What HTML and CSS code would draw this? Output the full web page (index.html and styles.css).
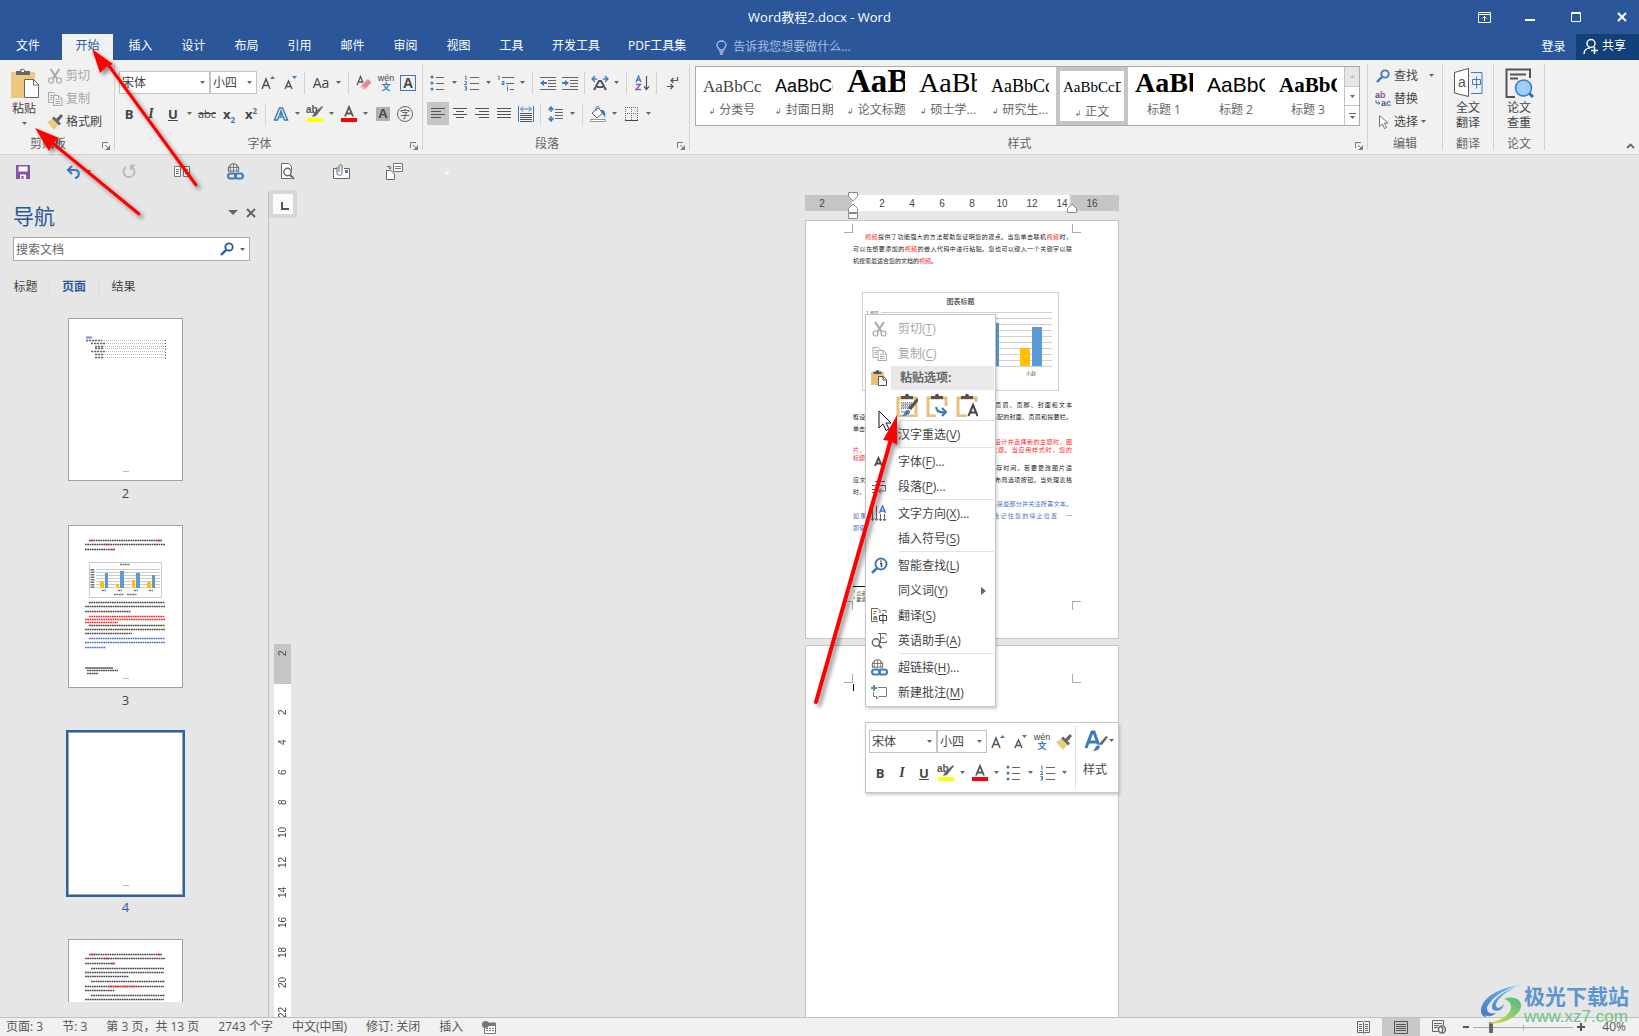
FILE: index.html
```html
<!DOCTYPE html>
<html lang="zh-CN">
<head>
<meta charset="utf-8">
<title>Word教程2.docx - Word</title>
<link rel="stylesheet" href="styles.css">
</head>
<body>
<svg class="defs" aria-hidden="true">
  <defs>
    <filter id="shadow" x="-20%" y="-20%" width="150%" height="150%"><feDropShadow dx="3" dy="3" stdDeviation="2" flood-color="#000" flood-opacity=".45"/></filter>
    <linearGradient id="lg1" x1="0" y1="1" x2="1" y2="0"><stop offset="0" stop-color="#4a78c4"/><stop offset="1" stop-color="#62c3ee"/></linearGradient>
    <linearGradient id="lg2" x1="0" y1="1" x2="1" y2="0"><stop offset="0" stop-color="#d9df4a"/><stop offset="1" stop-color="#4dba86"/></linearGradient>
  </defs>
  <symbol id="dn" viewBox="0 0 5 3"><path d="M0 0h5L2.500 3z" fill="#666"/></symbol>
  <symbol id="launch" viewBox="0 0 8 8"><path d="M.5 6V.5H6M3 3l3.500 3.500M7.500 3.500v4h-4" fill="none" stroke="#777"/><path d="M7.500 4v3.500H4z" fill="#777"/></symbol>
  <symbol id="paste" viewBox="0 0 29 31"><path d="M1 4h24v26H1z" fill="#edc87e"/><path d="M6 7V3h4c0-3 5-3 5 0h5v4z" fill="#666"/><rect x="11.500" y="2" width="2.500" height="2" fill="#fff"/><path d="M14.500 11.500h9l5 5v13h-14z" fill="#fff" stroke="#666"/><path d="M23.500 12v5h5" fill="none" stroke="#666"/></symbol>
  <symbol id="cut" viewBox="0 0 16 16"><path d="M3.500 1l6.500 9.500M12.500 1L6 10.500" stroke="currentColor" stroke-width="2" fill="none"/><circle cx="4" cy="12.500" r="2.500" fill="none" stroke="currentColor" stroke-width="1.200"/><circle cx="12" cy="12.500" r="2.500" fill="none" stroke="currentColor" stroke-width="1.200"/></symbol>
  <symbol id="copy" viewBox="0 0 16 16"><path d="M6 11.500H1.500v-10h5l2 2V5M3 4.500h3M3 6.500h2.500M3 8.500h2.500" fill="none" stroke="currentColor"/><path d="M6.500 4.500H12L15 7.500v7H6.500zM11.500 5v3H15M8.500 8.500h2M8.500 10.500h4.500M8.500 12.500h4.500" fill="none" stroke="currentColor"/></symbol>
  <symbol id="brush" viewBox="0 0 16 16"><path d="M0 8l5-3 6 6-4 5z" fill="#edc87e"/><path d="M5 4.500l2-2 7 7-2 2z" fill="#666"/><path d="M9 5l5-5 2 2-4.500 5.500z" fill="#666"/></symbol>
  <symbol id="grow" viewBox="0 0 14 16"><path d="M9 4h5L11.500 1z" fill="#3e7ab8"/><path d="M1 14L5 4l4 10M2.500 10.500h5" fill="none" stroke="#555" stroke-width="1.500"/></symbol>
  <symbol id="shrink" viewBox="0 0 14 16"><path d="M9 1h5l-2.500 3z" fill="#3e7ab8"/><path d="M2 14l3.500-8L9 14M3.500 11.500h4" fill="none" stroke="#555" stroke-width="1.500"/></symbol>
  <symbol id="eraser" viewBox="0 0 16 16"><path d="M1 10L4.500 1.500 7 8M2 7h4" fill="none" stroke="#555" stroke-width="1.300"/><path d="M5 11l7-7 3.500 3.500-7 7z" fill="#e8838f"/><path d="M4 12l2-2 3.500 3.500L8 15z" fill="#f3b8bf"/></symbol>
  <symbol id="bullets" viewBox="0 0 16 16"><g fill="#3e7ab8"><circle cx="2" cy="2" r="1.500"/><circle cx="2" cy="8" r="1.500"/><circle cx="2" cy="14" r="1.500"/></g><path d="M6 2.500h8M6 8.500h8M6 14.500h8" stroke="#666"/></symbol>
  <symbol id="numbers" viewBox="0 0 16 16"><path d="M1 1h1v4M.5 6.500h2v1.500l-2 1.500h2.500M.5 11.500h2v3.500h-2M1 13h1.500" stroke="#3e7ab8" fill="none"/><path d="M6 2.500h9M6 8.500h9M6 14.500h9" stroke="#666"/></symbol>
  <symbol id="multi" viewBox="0 0 18 16"><path d="M1 1h1v4M5 6.500h2v3H5V8h2M10.500 10v1M10.500 12v4" stroke="#3e7ab8" fill="none"/><path d="M5 2.500h12M9 8.500h8M13 14.500h4" stroke="#666"/></symbol>
  <symbol id="outdent" viewBox="0 0 16 14"><path d="M0 1.500h16M8 4.500h8M8 7.500h8M8 10.500h8M0 13.500h16" stroke="#666"/><path d="M0 7l4-3v2h3v2H4v2z" fill="#3e7ab8"/></symbol>
  <symbol id="indent" viewBox="0 0 16 14"><path d="M0 1.500h16M8 4.500h8M8 7.500h8M8 10.500h8M0 13.500h16" stroke="#666"/><path d="M7 7L3 4v2H0v2h3v2z" fill="#3e7ab8"/></symbol>
  <symbol id="asian" viewBox="0 0 18 16"><path d="M3 15l5-9h2l5 9M6 12h6" fill="none" stroke="#555" stroke-width="2"/><path d="M1 4h5M4 1L1 4l3 3M12 4h5M14 1l3 3-3 3" fill="none" stroke="#3e7ab8" stroke-width="1.300"/></symbol>
  <symbol id="sort" viewBox="0 0 16 16"><path d="M2 7l2.500-6L7 7M3 5h3" fill="none" stroke="#3e7ab8" stroke-width="1.300"/><path d="M2 9.500h4.500L2 14.500h5" fill="none" stroke="#9057b0" stroke-width="1.400"/><path d="M12.500 1v13M10 11.500l2.500 3 2.500-3" fill="none" stroke="#555" stroke-width="1.200"/></symbol>
  <symbol id="marks" viewBox="0 0 14 14"><path d="M12.500 1v3.500H6M8.500 2L6 4.500 8.500 7M2 10.500h6M5.500 8L8 10.500 5.500 13" fill="none" stroke="#555" stroke-width="1.200"/></symbol>
  <symbol id="al" viewBox="0 0 14 12"><path d="M0 .5h14M0 3.500h10M0 6.500h14M0 9.500h10" stroke="#555"/></symbol>
  <symbol id="ac" viewBox="0 0 14 12"><path d="M0 .5h14M3 3.500h8M0 6.500h14M3 9.500h8" stroke="#555"/></symbol>
  <symbol id="ar" viewBox="0 0 14 12"><path d="M0 .5h14M4 3.500h10M0 6.500h14M4 9.500h10" stroke="#555"/></symbol>
  <symbol id="aj" viewBox="0 0 14 12"><path d="M0 .5h14M0 3.500h14M0 6.500h14M0 9.500h14" stroke="#555"/></symbol>
  <symbol id="ad" viewBox="0 0 16 16"><path d="M.5 0v16M15.500 0v16M3 3h10M5 .5L2.500 3 5 5.500M11 .5L13.500 3 11 5.500" fill="none" stroke="#3e7ab8"/><path d="M2 7.500h12M2 9.500h12M2 11.500h12M2 13.500h12M2 15.500h12" stroke="#555"/></symbol>
  <symbol id="ls" viewBox="0 0 16 16"><path d="M3 1v5M3 10v5M.5 4L3 1l2.500 3M.5 12L3 15l2.500-3" fill="none" stroke="#3e7ab8" stroke-width="1.500"/><path d="M7 3.500h8M7 6.500h8M7 9.500h8M7 12.500h8" stroke="#666"/></symbol>
  <symbol id="bucket" viewBox="0 0 18 16"><path d="M3 7l6-5 5 5-6 5zM7 5V1.500c0-1.500 3-1.500 3 0V3" fill="#fff" stroke="#666"/><path d="M11 4c5-1 6 3 5 8-1-3-2-4-3-4z" fill="#3e7ab8"/><path d="M1.500 13.500h15v2h-15z" fill="#fff" stroke="#999"/></symbol>
  <symbol id="borders" viewBox="0 0 14 14"><path d="M.5 0v13M6.500 0v13M12.500 0v13M0 .5h13M0 6.500h13" stroke="#666" stroke-dasharray="1 1"/><path d="M0 13.500h13" stroke="#444"/></symbol>
  <symbol id="pen" viewBox="0 0 18 17"><path d="M16 1l1 1-7 9-4 1 2-4z" fill="#666"/><path d="M1 13h16v4H1z" fill="#ff0"/></symbol>
  <symbol id="fc" viewBox="0 0 18 17"><path d="M5 11.500L9 2l4 9.500M6 8.500h6" fill="none" stroke="#555" stroke-width="1.800"/><path d="M1 13h16v4H1z" fill="#f00"/></symbol>
  <symbol id="glow" viewBox="0 0 16 16"><path d="M1.500 14L6.500 2h3l5 12h-3l-1-3h-5l-1 3zM6.500 9h3L8 5z" fill="#fff" stroke="#3e7ab8" stroke-width="1.500"/></symbol>
  <symbol id="mag" viewBox="0 0 14 14"><circle cx="9" cy="5" r="3.700" fill="none" stroke="currentColor" stroke-width="1.800"/><path d="M6 8L1 13" stroke="currentColor" stroke-width="2.400"/></symbol>
  <symbol id="link" viewBox="0 0 17 17"><circle cx="6.500" cy="6" r="5.300" fill="none" stroke="#666"/><path d="M1 4.500h11M1 8h11M6.500.5v9M4 1.500C3 4 3 7 4 9M9 1.500c1 2.500 1 5 0 7" fill="none" stroke="#666" stroke-width=".8"/><path d="M0 9h17v8H0z" fill="var(--icon-bg,#e6e6e6)"/><rect x="1" y="10.500" width="8" height="5" rx="2.500" fill="none" stroke="#3e7ab8" stroke-width="2"/><rect x="8" y="10.500" width="8" height="5" rx="2.500" fill="none" stroke="#3e7ab8" stroke-width="2"/></symbol>
  <symbol id="cb" viewBox="0 0 22 24"><path d="M2 5h18v18H2z" fill="#fff" stroke="#e8c07a" stroke-width="3"/><path d="M5 6V3h4c0-3 4-3 4 0h4v3z" fill="#555"/></symbol>
</svg>

<div class="app">
  <header class="titlebar">
    <div class="title-row">
      <h1 class="title">Word教程2.docx - Word</h1>
      <div class="window-buttons">
        <button aria-label="功能区显示选项"><svg width="13" height="11"><path d="M.5.500h12v10H.5zM.5 2.500h12M6.500 9V5M4.500 6.500l2-2 2 2" fill="none" stroke="#fff"/></svg></button>
        <button aria-label="最小化"><svg width="10" height="11"><path d="M0 7h10v2H0z" fill="#fff"/></svg></button>
        <button aria-label="最大化"><svg width="10" height="10"><path d="M.5.500h9v9H.5zM0 1.500h10" fill="none" stroke="#fff"/></svg></button>
        <button aria-label="关闭"><svg width="10" height="10"><path d="M1 1l8 8M9 1L1 9" stroke="#fff" stroke-width="2"/></svg></button>
      </div>
    </div>
    <div class="tab-row">
      <nav class="tabs">
        <button class="tab file">文件</button><button class="tab active">开始</button><button class="tab">插入</button><button class="tab">设计</button><button class="tab">布局</button><button class="tab">引用</button><button class="tab">邮件</button><button class="tab">审阅</button><button class="tab">视图</button><button class="tab">工具</button><button class="tab">开发工具</button><button class="tab">PDF工具集</button>
      </nav>
      <button class="tell"><svg width="11" height="15" viewBox="0 0 11 15"><path d="M3.500 10C3 8 1 7.500 1 5a4.500 4 0 0 1 9 0c0 2.500-2 3-2.500 5zM3.500 12h4M4 14h3" fill="none" stroke="#a9bfe0" stroke-width="1.300"/></svg>告诉我您想要做什么...</button>
      <div class="account">
        <button class="login">登录</button>
        <button class="share"><svg width="16" height="17"><circle cx="8" cy="5.500" r="4" fill="none" stroke="#fff" stroke-width="1.500"/><path d="M1 16c0-4 3-6 6-6M11.500 9v7M8 12.500h7" fill="none" stroke="#fff" stroke-width="1.500"/></svg>共享</button>
      </div>
    </div>
  </header>

  <section class="ribbon">
    <div class="group clip">
      <div class="group-body">
        <button class="big"><svg width="29" height="31"><use href="#paste"/></svg><span>粘贴</span><svg class="dn" width="5" height="3"><use href="#dn"/></svg></button>
        <div class="stack">
          <button class="small off"><svg width="16" height="16"><use href="#cut"/></svg>剪切</button>
          <button class="small off"><svg width="16" height="16"><use href="#copy"/></svg>复制</button>
          <button class="small"><svg width="16" height="16"><use href="#brush"/></svg>格式刷</button>
        </div>
      </div>
      <div class="group-name">剪贴板<svg class="launch" width="8" height="8"><use href="#launch"/></svg></div>
    </div>
    <div class="group font">
      <div class="group-body rows">
        <div class="row">
          <label class="combo wide"><select aria-label="字体"><option>宋体</option></select><svg width="5" height="3"><use href="#dn"/></svg></label><label class="combo"><select aria-label="字号"><option>小四</option></select><svg width="5" height="3"><use href="#dn"/></svg></label>
          <button class="ib"><svg width="14" height="16"><use href="#grow"/></svg></button><button class="ib"><svg width="14" height="16"><use href="#shrink"/></svg></button><i class="sep"></i>
          <button class="ib aa">Aa</button><button class="dd"><svg width="5" height="3"><use href="#dn"/></svg></button><i class="sep"></i>
          <button class="ib"><svg width="16" height="16"><use href="#eraser"/></svg></button><button class="ib"><span class="wen">wén<b>文</b></span></button><button class="ib"><span class="boxed">A</span></button>
        </div>
        <div class="row">
          <button class="ib b">B</button><button class="ib i">I</button><button class="ib u">U</button><button class="dd"><svg width="5" height="3"><use href="#dn"/></svg></button>
          <button class="ib strike">abc</button><button class="ib b"><span>x<sub>2</sub></span></button><button class="ib b"><span>x<sup>2</sup></span></button><i class="sep"></i>
          <button class="ib"><svg width="16" height="16"><use href="#glow"/></svg></button><button class="dd"><svg width="5" height="3"><use href="#dn"/></svg></button>
          <button class="ib"><svg width="18" height="17"><text class="ab" x="0" y="8">ab</text><use href="#pen"/></svg></button><button class="dd"><svg width="5" height="3"><use href="#dn"/></svg></button>
          <button class="ib"><svg width="18" height="17"><use href="#fc"/></svg></button><button class="dd"><svg width="5" height="3"><use href="#dn"/></svg></button>
          <button class="ib"><span class="shaded">A</span></button><button class="ib"><span class="circled">字</span></button>
        </div>
      </div>
      <div class="group-name">字体<svg class="launch" width="8" height="8"><use href="#launch"/></svg></div>
    </div>
    <div class="group para">
      <div class="group-body rows">
        <div class="row">
          <button class="ib"><svg width="16" height="16"><use href="#bullets"/></svg></button><button class="dd"><svg width="5" height="3"><use href="#dn"/></svg></button>
          <button class="ib"><svg width="16" height="16"><use href="#numbers"/></svg></button><button class="dd"><svg width="5" height="3"><use href="#dn"/></svg></button>
          <button class="ib"><svg width="18" height="16"><use href="#multi"/></svg></button><button class="dd"><svg width="5" height="3"><use href="#dn"/></svg></button><i class="sep"></i>
          <button class="ib"><svg width="16" height="14"><use href="#outdent"/></svg></button><button class="ib"><svg width="16" height="14"><use href="#indent"/></svg></button><i class="sep"></i>
          <button class="ib"><svg width="18" height="16"><use href="#asian"/></svg></button><button class="dd"><svg width="5" height="3"><use href="#dn"/></svg></button><i class="sep"></i>
          <button class="ib"><svg width="16" height="16"><use href="#sort"/></svg></button><i class="sep"></i>
          <button class="ib"><svg width="14" height="14"><use href="#marks"/></svg></button>
        </div>
        <div class="row">
          <button class="ib on"><svg width="14" height="12"><use href="#al"/></svg></button><button class="ib"><svg width="14" height="12"><use href="#ac"/></svg></button><button class="ib"><svg width="14" height="12"><use href="#ar"/></svg></button><button class="ib"><svg width="14" height="12"><use href="#aj"/></svg></button><button class="ib"><svg width="16" height="16"><use href="#ad"/></svg></button><i class="sep"></i>
          <button class="ib"><svg width="16" height="16"><use href="#ls"/></svg></button><button class="dd"><svg width="5" height="3"><use href="#dn"/></svg></button><i class="sep"></i>
          <button class="ib"><svg width="18" height="16"><use href="#bucket"/></svg></button><button class="dd"><svg width="5" height="3"><use href="#dn"/></svg></button>
          <button class="ib"><svg width="14" height="14"><use href="#borders"/></svg></button><button class="dd"><svg width="5" height="3"><use href="#dn"/></svg></button>
        </div>
      </div>
      <div class="group-name">段落<svg class="launch" width="8" height="8"><use href="#launch"/></svg></div>
    </div>
    <div class="group styles">
      <div class="group-body">
        <div class="gallery">
          <div class="style-list">
            <button class="style"><span class="sample"><span class="s-song">AaBbCc</span></span><span class="cap"><i>↲</i>分类号</span></button>
            <button class="style"><span class="sample"><span class="s-hei">AaBbCc</span></span><span class="cap"><i>↲</i>封面日期</span></button>
            <button class="style"><span class="sample"><span class="s-huge">AaB</span></span><span class="cap"><i>↲</i>论文标题</span></button>
            <button class="style"><span class="sample"><span class="s-big">AaBb</span></span><span class="cap"><i>↲</i>硕士学...</span></button>
            <button class="style"><span class="sample"><span class="s-mid">AaBbCc</span></span><span class="cap"><i>↲</i>研究生...</span></button>
            <button class="style chosen"><span class="sample"><span class="s-body">AaBbCcD</span></span><span class="cap"><i>↲</i>正文</span></button>
            <button class="style"><span class="sample"><span class="s-h1">AaBb</span></span><span class="cap">标题 1</span></button>
            <button class="style"><span class="sample"><span class="s-h2">AaBbC</span></span><span class="cap">标题 2</span></button>
            <button class="style"><span class="sample"><span class="s-h3">AaBbC</span></span><span class="cap">标题 3</span></button>
          </div>
          <div class="gallery-scroll">
            <button class="dim" aria-label="上一行"><svg width="5" height="3"><path d="M0 3h5L2.500 0z" fill="#bbb"/></svg></button>
            <button aria-label="下一行"><svg width="5" height="3"><use href="#dn"/></svg></button>
            <button aria-label="其他"><svg width="7" height="6"><path d="M0 .5h7" stroke="#666"/><path d="M1 3h5L3.500 6z" fill="#666"/></svg></button>
          </div>
        </div>
      </div>
      <div class="group-name">样式<svg class="launch" width="8" height="8"><use href="#launch"/></svg></div>
    </div>
    <div class="group edit">
      <div class="group-body">
        <div class="stack">
          <button class="small blue"><svg width="14" height="14"><use href="#mag"/></svg><span>查找</span><svg class="far" width="5" height="3"><use href="#dn"/></svg></button>
          <button class="small"><svg width="16" height="16"><text x="0" y="7" font-size="9" font-weight="700" font-family="Liberation Sans"><tspan fill="#555">a</tspan><tspan fill="#9057b0">b</tspan></text><text x="6" y="15" font-size="9" font-weight="700" font-family="Liberation Sans"><tspan fill="#555">a</tspan><tspan fill="#3e7ab8">c</tspan></text><path d="M1 9v3h4M3 10.500L5 12l-2 1.500" fill="none" stroke="#3e7ab8"/></svg><span>替换</span></button>
          <button class="small"><svg width="16" height="16"><path d="M4.500 1.500v11l3-2.500 2 4.500 2-1-2-4.500H13z" fill="#fff" stroke="#777"/></svg><span>选择</span><svg width="5" height="3"><use href="#dn"/></svg></button>
        </div>
      </div>
      <div class="group-name">编辑</div>
    </div>
    <div class="group narrow">
      <div class="group-body"><button class="big"><svg width="29" height="30"><path d="M.5 4.500l14-4v28l-14-3.500z" fill="#fff" stroke="#555"/><text x="4" y="19" font-size="14" font-family="Liberation Sans" fill="#555">a</text><path d="M17 4.500h11v21H17M18.500 11.500h8v5h-8zM22.500 8.500v12" fill="none" stroke="#3e7ad8"/></svg><span>全文<br>翻译</span></button></div>
      <div class="group-name">翻译</div>
    </div>
    <div class="group narrow">
      <div class="group-body"><button class="big"><svg width="29" height="30"><path d="M25 10V1.500H1.500V29H10" fill="none" stroke="#555" stroke-width="2"/><path d="M5 6.500h16M5 10.500h8" stroke="#555" stroke-width="2"/><path d="M24 25l4 4" stroke="#2d6fa8" stroke-width="3"/><circle cx="18.500" cy="20" r="8" fill="#9fcdf5" stroke="#2d7fc0" stroke-width="1.500"/></svg><span>论文<br>查重</span></button></div>
      <div class="group-name">论文</div>
    </div>
    <div class="tail"><button aria-label="折叠功能区"><svg width="9" height="6"><path d="M1 5l3.500-3.500L8 5" fill="none" stroke="#666" stroke-width="1.800"/></svg></button></div>
  </section>

  <div class="qat">
    <button aria-label="保存"><svg width="14" height="14"><path d="M0 0h14v14H0z" fill="#8a51ae"/><path d="M2.500 1.500h9v5h-9zM4 9.500h6V14H4z" fill="#fff"/><path d="M5.500 11h2v3h-2z" fill="#8a51ae"/></svg></button>
    <button aria-label="撤消" class="undo"><svg width="16" height="14"><path d="M2 5h7c5 0 5 7 0 8M6 1L2 5l4 4" fill="none" stroke="#3e7ab8" stroke-width="2.200"/></svg><svg width="5" height="3"><use href="#dn"/></svg></button>
    <button aria-label="重复"><svg width="15" height="15"><path d="M9 2.500A5.500 5.500 0 1 1 4 3M9 6V1.500h4" fill="none" stroke="#b5b5b5" stroke-width="1.700"/></svg></button>
    <button aria-label="双页"><svg width="16" height="13"><path d="M.5 1.500h6v10h-6zM9.500 1.500h6v10h-6zM2 4.500h3M2 6.500h3M2 8.500h3M11 4.500h3M11 6.500h3M11 8.500h3" fill="#fff" stroke="#777"/></svg></button>
    <button aria-label="超链接"><svg width="17" height="17"><use href="#link"/></svg></button>
    <button aria-label="打印预览"><svg width="16" height="17"><path d="M11 15.500H1.500V.5h7l3 3v4" fill="#fff" stroke="#666"/><circle cx="7.500" cy="9" r="3.700" fill="#fff" stroke="#666" stroke-width="1.400"/><path d="M10 12l4 4" stroke="#666" stroke-width="2"/></svg></button>
    <button aria-label="附件"><svg width="17" height="16"><path d="M4 4.500H.5v10h16v-10H11" fill="#fff" stroke="#666"/><path d="M12 6h3v3h-3z" fill="#3e7ab8"/><path d="M4 3v6c0 3 5 3 5 0V2c0-2-3-2-3 0v6" fill="none" stroke="#666"/></svg></button>
    <button aria-label="文档"><svg width="17" height="17"><path d="M7.500.5h9v8h-9zM9 3.500h6M9 5.500h6" fill="#fff" stroke="#777"/><path d="M.5 7.500H5L8.500 11v5.500h-8z" fill="#fff" stroke="#666"/><path d="M1 3.500h3V6M2.500 4.500L4 6l1.500-1.500" fill="none" stroke="#3e7ab8"/></svg></button>
    <button aria-label="自定义"><svg width="6" height="6"><path d="M0 .5h6M0 3h6L3 6z" fill="#f7f7f7" stroke="#f7f7f7" stroke-width=".6"/></svg></button>
  </div>

  <main class="workspace">
    <aside class="nav-pane">
      <div class="nav-head"><h2>导航</h2><button aria-label="选项"><svg width="10" height="5"><path d="M0 0h10L5 5z" fill="#666"/></svg></button><button aria-label="关闭"><svg width="10" height="10"><path d="M1 1l8 8M9 1L1 9" stroke="#666" stroke-width="2"/></svg></button></div>
      <div class="search"><input type="text" placeholder="搜索文档" aria-label="搜索文档"><button aria-label="搜索"><svg width="14" height="14"><use href="#mag"/></svg></button><button aria-label="搜索选项"><svg width="5" height="3"><use href="#dn"/></svg></button></div>
      <div class="nav-tabs"><button>标题</button><button class="on">页面</button><button>结果</button></div>
      <div class="thumbs">
        <button class="thumb"><svg viewBox="0 0 113 161"><g stroke="#bbb" stroke-dasharray="1 1"><path d="M17 21.500h80M23 24.500h74M26 27.500h71M26 29.500h71M23 32.500h74M26 35.500h71M26 38.500h71"/></g><path d="M17 18.500h6" stroke="#6f8fd0" stroke-width="2"/><g stroke="#666" stroke-width="1.500" stroke-dasharray="2 1"><path d="M17 21.500h16M22 24.500h14M26 27.500h9M26 29.500h9M22 32.500h14M26 35.500h9M26 38.500h9"/></g><path d="M96.500 21v19" stroke="#555" stroke-dasharray="1 2"/><path d="M54 152.500h6" stroke="#bbb"/></svg><span>2</span></button>
        <button class="thumb"><svg viewBox="0 0 113 161"><g stroke="#444" stroke-width="1.500" stroke-dasharray="1.700 .6" fill="none"><path d="M20 14.500h73M16 18.500h80M16 23.500h30M20 76.500h76M16 80.500h80M16 85.500h46M20 99.500h76M16 103.500h80M16 107.500h47"/><path stroke="#f22" d="M20 14.500h5M87 14.500h5M35 18.500h5M42 23.500h4M20 90.500h76M16 93.500h80M16 96.500h33"/><path stroke="#4472c4" d="M20 112.500h76M16 116.500h80M16 121.500h21"/><path d="M18 144.500h31M18 147.500h11"/></g><path d="M16 142h28" stroke="#111"/><path d="M20.500 36.500h72v35h-72z" fill="#fff" stroke="#ccc"/><path d="M27 43.500h64M27 46.500h64M27 49.500h64M27 52.500h64M27 55.500h64M27 58.500h64M27 61.500h64" stroke="#ccc"/><path d="M31 56h4v6h-4zM47 58h3v4h-3zM63 54h3v8h-3zM78 56h4v6h-4z" fill="#ffc000"/><path d="M36 47h3v15h-3zM51 45h4v17h-4zM67 47h4v15h-4zM83 49h3v13h-3z" fill="#5b9bd5"/><path d="M51 38.500h10M33 64.500h4M49 64.500h4M65 64.500h4M80 64.500h4M45 68.500h10M58 68.500h10" stroke="#777" stroke-width="1.500" stroke-dasharray="2 .5"/><path d="M23.500 43v19" stroke="#777" stroke-width="4" stroke-dasharray="1.500 1"/><path d="M54 152.500h6" stroke="#bbb"/></svg><span>3</span></button>
        <button class="thumb current"><svg viewBox="0 0 113 161"><path d="M54 152.500h6" stroke="#bbb"/></svg><span>4</span></button>
        <button class="thumb"><svg viewBox="0 0 113 161"><g stroke="#444" stroke-width="1.500" stroke-dasharray="1.700 .6" fill="none"><path d="M20 14.500h73M16 18.500h80M16 23.500h30M22 28.500h73M16 32.500h79M16 36.500h44M22 41.500h74M16 46.500h79M16 50.500h30M22 55.500h74M16 59.500h79"/><path stroke="#f22" d="M22 14.500h5M87 14.500h5M35 18.500h5M42 23.500h4M39 46.500h30"/></g></svg></button>
      </div>
    </aside>
    <div class="vcol">
      <button class="tabstop" aria-label="制表符"><svg width="8" height="8"><path d="M1 0v7h7" fill="none" stroke="#555" stroke-width="2"/></svg></button>
      <div class="vruler"><div class="vmargin"><span>2</span></div><span>2</span><span>4</span><span>6</span><span>8</span><span>10</span><span>12</span><span>14</span><span>16</span><span>18</span><span>20</span><span>22</span></div>
    </div>
    <div class="canvas">
      <div class="sheetcol">
        <div class="hruler"><span>2</span><span></span><span>2</span><span>4</span><span>6</span><span>8</span><span>10</span><span>12</span><span>14</span><span>16</span>
          <svg class="mark-left" width="12" height="28"><path d="M1.500.5h9v4L6 9 1.500 4.500zM6 12l4.500 4.500v4h-9v-4zM1.500 21.500h9v5h-9z" fill="#fff" stroke="#888"/></svg>
          <svg class="mark-right" width="12" height="12"><path d="M6 1l4.500 4.500v4h-9v-4z" fill="#fff" stroke="#888"/></svg>
        </div>
        <article class="page">
          <i class="crop tl"></i><i class="crop tr"></i><i class="crop bl"></i><i class="crop br"></i>
          <p><span class="first"><em>视频</em>提供了功能强大的方法帮助您证明您的观点。当您单击联机<em>视频</em>时，</span><span>可以在想要添加的<em>视频</em>的嵌入代码中进行粘贴。您也可以键入一个关键字以联</span><span class="last">机搜索最适合您的文档的<em>视频</em>。</span></p>
          <figure class="chart">
            <figcaption>图表标题</figcaption>
            <svg width="195" height="84" viewBox="0 0 195 84"><text x="3" y="8" font-size="5" font-family="Liberation Sans" fill="#555">1,800</text><path d="M18 5.500h171M18 11.500h171M18 17.500h171M18 23.500h171M18 29.500h171M18 35.500h171M18 41.500h171M18 47.500h171M18 53.500h171M18 59.500h171" stroke="#d0d0d0"/><path d="M157 41h10v18h-10z" fill="#ffc000"/><path d="M126 16h10v43h-10zM169 20h10v39h-10z" fill="#5b9bd5"/><text x="163" y="68" font-size="5" font-family="Noto Sans CJK SC" fill="#444">小赵</text></svg>
          </figure>
          <p><span class="first">为使您的文档具有专业外观，Word 提供了页眉、页脚、封面和文本</span><span>框设计，这些设计可互为补充。例如，您可以添加匹配的封面、页眉和提要栏。</span><span class="last">单击“插入”，然后从不同库中选择所需元素。</span></p>
          <p class="red"><span class="first">主题和样式也有助于文档保持协调。当您单击设计并选择新的主题时，图</span><span>片、图表或 SmartArt 图形将会更改以匹配新的主题。当应用样式时，您的</span><span class="last">标题会进行更改以匹配新的主题。</span></p>
          <p><span class="first">使用在需要位置出现的新按钮在 Word 中保存时间。若要更改图片适</span><span>应文档的方式，请单击该图片，图片旁边将会显示布局选项按钮。当处理表格</span><span class="last">时，单击要添加行或列的位置，然后单击加号。</span></p>
          <p class="blue"><span class="first">在新的阅读视图中阅读更加容易。可以折叠文档某些部分并关注所需文本。</span><span>如果在达到结尾处之前需要停止读取，Word 会记住您的停止位置 &nbsp; 一</span><span class="last">即使在另一个设备上。</span></p>
          <footer><span>¹ 点击此处</span><span>² 要添加行</span></footer>
        </article>
        <article class="page next"><i class="crop tl"></i><i class="crop tr"></i><i class="caret"></i></article>

        <div class="menu" role="menu">
          <button class="off"><svg width="16" height="16"><use href="#cut"/></svg><span>剪切(<u>T</u>)</span></button>
          <button class="off"><svg width="16" height="16"><use href="#copy"/></svg><span>复制(<u>C</u>)</span></button>
          <div class="menu-head"><svg width="16" height="16" viewBox="0 0 16 16"><path d="M0 2h13v13H0z" fill="#e8c07a"/><path d="M2.500 4V1.500h2.500c0-2 3-2 3 0h2.500V4z" fill="#555"/><path d="M7.500 6.500h5l3 3v6h-8zM12 7v3h3" fill="#fff" stroke="#555"/></svg><strong>粘贴选项:</strong></div>
          <div class="paste-opts">
            <button aria-label="保留源格式"><svg width="22" height="24"><use href="#cb"/><path d="M5 9.500h11M5 12.500h11M5 15.500h8" stroke="#d35b3a" stroke-dasharray="1 1"/><path d="M5 11h11M5 14h9M5 19h5" stroke="#3e7ab8"/><path d="M21 6l1 1-7 9-2-1z" fill="#555" stroke="#555" stroke-width="1.500"/><path d="M5 23c4 0 3-6 7-6 3 0 4 6-7 6z" fill="#3e7ab8"/></svg></button>
            <button aria-label="合并格式"><svg width="22" height="24"><use href="#cb"/><path d="M10 13h12v11H10z" fill="#fff"/><path d="M10 14c1 5 4 6 9 5M16 15l4 4-4 4" fill="none" stroke="#3e7ab8" stroke-width="2.200"/></svg></button>
            <button aria-label="只保留文本"><svg width="22" height="24"><use href="#cb"/><path d="M11 9h11v15H11z" fill="#fff"/><path d="M12.500 23L17 12l4.500 11M14 19.500h6" fill="none" stroke="#444" stroke-width="2"/></svg></button>
          </div>
          <hr>
          <button><svg width="16" height="16"></svg><span>汉字重选(<u>V</u>)</span></button>
          <hr>
          <button><svg width="16" height="16"><path d="M4 12l3.500-8L11 12M5 9.500h5" fill="none" stroke="#444" stroke-width="1.800"/></svg><span>字体(<u>F</u>)...</span></button>
          <button><svg width="16" height="16"><path d="M4 2.500h10M1 6.500h13M1 10.500h5M1 13.500h5M14.500 6v6H8M10 9.500L7.500 12l2.500 2.500" fill="none" stroke="#666"/></svg><span>段落(<u>P</u>)...</span></button>
          <hr>
          <button><svg width="16" height="18"><path d="M1.500 1v14M5.500 1v14M9.500 9v7M13.500 9v7M8 14l1.500 2 1.500-2M12 14l1.500 2 1.500-2M0 13.500l1.500 2 1.500-2M4 13.500l1.500 2 1.500-2" fill="none" stroke="#666"/><path d="M8.500 8L11.500 1l3 7M9.500 6h4" fill="none" stroke="#3e7ab8" stroke-width="1.500"/></svg><span>文字方向(<u>X</u>)...</span></button>
          <button><svg width="16" height="16"></svg><span>插入符号(<u>S</u>)</span></button>
          <hr>
          <button><svg width="17" height="17"><circle cx="10" cy="7" r="5.500" fill="none" stroke="#3e7ab8" stroke-width="2"/><path d="M6 11l-5 5" stroke="#3e7ab8" stroke-width="2.600"/><path d="M10 3.500v1.500M9 6.500h1.500V10" fill="none" stroke="#444" stroke-width="1.500"/></svg><span>智能查找(<u>L</u>)</span></button>
          <button><svg width="16" height="16"></svg><span>同义词(<u>Y</u>)</span><svg class="sub" width="5" height="8"><path d="M0 0l5 4-5 4z" fill="#666"/></svg></button>
          <button><svg width="17" height="16"><path d="M7 13.500H.5V.5H7l2 2V5" fill="none" stroke="#666"/><path d="M2 3.500h4M2 5.500h3" stroke="#d8793a"/><text x="2" y="12" font-size="8" font-weight="700" font-family="Liberation Sans" fill="#555">a</text><path d="M8.500 7.500h7v5h-7zM12 5v11" fill="none" stroke="#444"/><path d="M11 2.500h4V5" fill="none" stroke="#3e7ab8"/></svg><span>翻译(<u>S</u>)</span></button>
          <button><svg width="17" height="16"><circle cx="5" cy="9.500" r="3.700" fill="none" stroke="#666" stroke-width="1.400"/><path d="M7.500 12l3 3" stroke="#666" stroke-width="2"/><path d="M7 .5h8v2M9.500 1v9M9.500 5h4M7.500 9.500h8V8" fill="none" stroke="#666"/></svg><span>英语助手(<u>A</u>)</span></button>
          <hr>
          <button class="onwhite"><svg width="17" height="17"><use href="#link"/></svg><span>超链接(<u>H</u>)...</span></button>
          <button><svg width="16" height="16"><path d="M7 2.500h8.500v9H8L5.500 14v-2.500H2.500V7" fill="none" stroke="#777"/><path d="M3 0v6M0 3h6" stroke="#4a9b7f" stroke-width="2"/></svg><span>新建批注(<u>M</u>)</span></button>
        </div>

        <div class="mini">
          <div class="mini-tools">
            <div class="row"><label class="combo mid"><select aria-label="字体"><option>宋体</option></select><svg width="5" height="3"><use href="#dn"/></svg></label><label class="combo size"><select aria-label="字号"><option>小四</option></select><svg width="5" height="3"><use href="#dn"/></svg></label>
              <button class="ib"><svg width="14" height="16"><use href="#grow"/></svg></button><button class="ib"><svg width="14" height="16"><use href="#shrink"/></svg></button><button class="ib"><span class="wen">wén<b>文</b></span></button><button class="ib"><svg width="16" height="16"><use href="#brush"/></svg></button></div>
            <div class="row"><button class="ib b">B</button><button class="ib i">I</button><button class="ib u">U</button>
              <button class="ib"><svg width="18" height="17"><text class="ab" x="0" y="8">ab</text><use href="#pen"/></svg></button><button class="dd"><svg width="5" height="3"><use href="#dn"/></svg></button>
              <button class="ib"><svg width="18" height="17"><use href="#fc"/></svg></button><button class="dd"><svg width="5" height="3"><use href="#dn"/></svg></button>
              <button class="ib"><svg width="16" height="16"><use href="#bullets"/></svg></button><button class="dd"><svg width="5" height="3"><use href="#dn"/></svg></button>
              <button class="ib"><svg width="16" height="16"><use href="#numbers"/></svg></button><button class="dd"><svg width="5" height="3"><use href="#dn"/></svg></button></div>
          </div>
          <button class="mini-style"><svg width="30" height="24"><path d="M2 18L8 2h2l5 14M4.500 12h9" fill="none" stroke="#3e7ab8" stroke-width="3"/><path d="M22 6l2 1-6 8-3-1z" fill="#666"/><path d="M6 22c5 0 4-7 8-7 4 0 3 7-8 7z" fill="#3e7ab8" stroke="#fff"/><path d="M25 9h5l-2.500 3z" fill="#666"/></svg><span>样式</span></button>
        </div>
        <svg class="pointer" width="14" height="22"><path d="M1 1v17l4-4 3 6.500 3-1.500-3-6h5z" fill="#fff" stroke="#112"/></svg>
        <svg class="arrow3" width="120" height="310"><g filter="url(#shadow)"><path d="M7 289L82 26" stroke="#f00" stroke-width="4" stroke-linecap="round"/><path d="M88 2v30l-6-4-8-1z" fill="#f00"/></g></svg>
      </div>
    </div>
  </main>

  <footer class="status">
    <span>页面: 3</span><span>节: 3</span><span>第 3 页，共 13 页</span><span>2743 个字</span><span>中文(中国)</span><span>修订: 关闭</span><span>插入</span>
    <svg width="14" height="13"><path d="M5 2h8.500v10.500h-11V7" fill="#fff" stroke="#777"/><path d="M5 2h9v3H5z" fill="#777"/><circle cx="3.500" cy="3.500" r="3.500" fill="#777"/><path d="M4 7.500h8M4 9.500h8" stroke="#777" stroke-dasharray="2 1"/></svg>
    <div class="views">
      <button aria-label="阅读视图"><svg width="13" height="13"><path d="M.5.500h5l1 1 1-1h5v11h-5l-1 1-1-1h-5zM6.500 2v10M2 3.500h3M2 5.500h3M2 7.500h3M2 9.500h3M8 3.500h3M8 5.500h3M8 7.500h3M8 9.500h3" fill="none" stroke="#666"/></svg></button>
      <button class="on" aria-label="页面视图"><svg width="14" height="13"><path d="M.5.500h13v12H.5zM2 3.500h10M2 5.500h10M2 7.500h10M2 9.500h10" fill="none" stroke="#555"/></svg></button>
      <button aria-label="Web 版式"><svg width="14" height="14"><path d="M6 11.500H.5V.5h11V5M2 3.500h8M2 5.500h5M2 7.500h4" fill="none" stroke="#666"/><circle cx="10" cy="9.500" r="3.500" fill="#fff" stroke="#666" stroke-width="1.500"/><path d="M9 7l2 2-1 3" fill="none" stroke="#666" stroke-width="1.500"/></svg></button>
      <button class="pm" aria-label="缩小"><svg width="6" height="8"><path d="M0 4h6" stroke="#555" stroke-width="2"/></svg></button>
      <input type="range" min="0" max="100" value="17" aria-label="显示比例">
      <button class="pm" aria-label="放大"><svg width="8" height="8"><path d="M0 4h8M4 0v8" stroke="#555" stroke-width="2"/></svg></button>
      <span class="pct">40%</span>
    </div>
  </footer>

  <svg class="arrows" width="230" height="240"><g filter="url(#shadow)"><path d="M196 185L107 63M139 214L50 141" stroke="#f00" stroke-width="3" stroke-linecap="round"/><path d="M92 49l21 15-7 3-6 6zM35 128l24 10-6 5-4 8z" fill="#f00"/></g></svg>
  <div class="watermark">
    <svg width="44" height="42" viewBox="0 0 44 42"><path d="M42 1C20 3 0 14 1 28c1 5 5 5 5 5C2 20 22 4 42 1z" fill="url(#lg1)"/><path d="M38 3C24 6 12 16 12 23c0 6 11 5 12-3-3 4-7 5-8 2-1-5 9-15 22-19zM3 27c0 7 10 6 13 2-5 1-9 0-9-5 0-8 12-17 22-20C14 8 3 18 3 27z" fill="url(#lg1)"/><path d="M24 15c10-4 18 1 17 8-2 10-20 19-34 16 12-1 24-8 24-16 0-4-3-7-7-8z" fill="url(#lg2)"/></svg>
    <div><b>极光下载站</b><span>www.xz7.com</span></div>
  </div>
</div>
</body>
</html>
```

FILE: styles.css
```css
* { box-sizing: border-box; }
body { margin: 0; font: 12px/16px "Open Sans", "Noto Sans CJK SC", sans-serif; color: #444; background: #e6e6e6; }
button { font: inherit; color: inherit; background: none; border: 0; padding: 0; margin: 0; }
h1, h2, p, figure, hr { margin: 0; font-weight: 400; }
svg { display: block; flex: none; }
.defs { position: absolute; width: 0; height: 0; }
.app { position: relative; display: flex; flex-direction: column; height: 100vh; overflow: hidden; }

/* title bar and tabs */
.titlebar { background: #2b579a; color: #fff; }
.title-row { display: grid; grid-template-columns: 1fr auto 1fr; align-items: center; height: 34px; }
.title { grid-column: 2; font-size: 13px; }
.window-buttons { display: flex; justify-content: flex-end; gap: 12px; }
.window-buttons button { width: 34px; height: 30px; display: grid; place-items: center; }
.tab-row { display: flex; align-items: stretch; height: 26px; }
.tabs { display: flex; gap: 2px; }
.tab { min-width: 51px; padding: 0 13px 2px; white-space: nowrap; }
.tab.file { min-width: 56px; margin-right: 4px; }
.tab.active { background: #f1f1f1; color: #2b579a; }
.tell { display: flex; align-items: center; gap: 6px; margin-left: 17px; color: #a9bfe0; white-space: nowrap; }
.account { margin-left: auto; display: flex; }
.login { width: 45px; }
.share { display: flex; align-items: center; gap: 3px; width: 63px; padding: 0 0 2px 7px; background: #124078; }

/* ribbon */
.ribbon { display: flex; flex: none; height: 95px; padding: 4px 0; background: #f1f1f1; border-bottom: 1px solid #d2d2d2; }
.group { display: flex; flex-direction: column; border-right: 1px solid #d2d2d2; }
.clip { width: 115px; }
.font { width: 308px; }
.para { width: 267px; }
.styles { flex: 1; min-width: 0; }
.edit { width: 75px; }
.narrow { width: 51px; }
.tail { width: 94px; display: flex; justify-content: flex-end; align-items: flex-end; padding: 0 4px 1px 0; }
.group-body { flex: 1; display: flex; min-height: 0; }
.group-name { position: relative; height: 14px; line-height: 16px; text-align: center; color: #666; }
.clip .group-name, .font .group-name, .para .group-name, .styles .group-name { padding-right: 18px; }
.launch { position: absolute; right: 4px; bottom: 0; }
.big { display: flex; flex-direction: column; align-items: center; padding-top: 4px; line-height: 15px; }
.clip .big { width: 38px; margin-left: 5px; }
.clip .big .dn { margin-top: 6px; }
.big span { margin-top: 2px; }
.narrow .big { width: 100%; }
.stack { display: flex; flex-direction: column; }
.small { display: flex; align-items: center; gap: 3px; height: 23px; white-space: nowrap; }
.clip .stack { margin-left: 4px; }
.edit .stack { padding-left: 7px; }
.edit .small { width: 66px; }
.edit .small > svg:first-child { width: 16px; }
.edit .small .far { margin-left: 8px; }
.off { color: #a8a8a8; }
.blue > svg:first-child { color: #3e7ab8; }
.rows { flex-direction: column; gap: 8px; padding: 7px 0 0 3px; }
.para .rows { padding-left: 4px; }
.row { display: flex; align-items: center; height: 23px; }
.ib { flex: none; width: 22px; height: 23px; display: grid; place-items: center; }
.ib.on { background: #c5c5c5; }
.dd { flex: none; width: 12px; height: 23px; display: flex; align-items: center; padding-left: 3px; }
.sep { flex: none; width: 1px; height: 22px; background: #d2d2d2; margin: 0 4px 0 3px; }
.aa { font-size: 14px; width: 24px; }
.font .row:first-child { padding-left: 1px; }
.b { font-weight: 700; font-size: 13px; }
.b sub, .b sup { font-size: 8px; line-height: 0; color: #3e7ab8; }
.i { font: italic 700 14px "Liberation Serif", serif; }
.u { font-weight: 700; font-size: 13px; text-decoration: underline; }
.strike { font-size: 11px; text-decoration: line-through; }
.ab { font: 700 10px "Liberation Sans", sans-serif; fill: #555; }
.wen { display: flex; flex-direction: column; align-items: center; font: 9px/8px "Liberation Sans", sans-serif; }
.wen b { font: 700 9px/9px "Noto Sans CJK SC", sans-serif; color: #3e7ab8; }
.boxed { width: 16px; height: 16px; border: 1px solid #3e7ab8; font: 700 14px/14px "Liberation Sans", sans-serif; }
.shaded { width: 14px; height: 14px; background: #b0b0b0; font: 700 13px/14px "Liberation Sans", sans-serif; }
.circled { width: 16px; height: 16px; border: 1px solid #666; border-radius: 50%; font-size: 10px; line-height: 14px; }
.combo { position: relative; display: block; flex: none; width: 47px; height: 23px; }
.combo.wide { width: 91px; }
.combo.mid { width: 68px; }
.combo.size { width: 50px; }
.combo select { appearance: none; width: 100%; height: 100%; padding: 0 2px; border: 1px solid #c3c3c3; background: #fff; font: inherit; color: #444; border-radius: 0; }
.combo svg { position: absolute; right: 5px; top: 10px; pointer-events: none; }
.gallery { display: flex; flex: 1; min-width: 0; height: 60px; margin: 2px 7px 0 5px; border: 1px solid #ababab; background: #fff; }
.style-list { display: flex; flex: 1; min-width: 0; overflow: hidden; }
.style { flex: none; width: 72px; height: 58px; padding: 0 7px; display: flex; flex-direction: column; }
.style.chosen { border: 4px solid #c5c5c5; padding: 0 3px; }
.style.chosen .sample { height: 32px; line-height: 28px; }
.sample { width: 58px; height: 34px; overflow: hidden; white-space: nowrap; text-align: left; color: #000; font: 20px/36px "Liberation Serif", serif; }
.sample span { line-height: 0; }
.style.chosen .cap { height: 18px; }
.cap { width: 58px; white-space: nowrap; color: #666; text-align: center; line-height: 18px; }
.cap i { font: 8px "DejaVu Sans", sans-serif; margin-right: 4px; }
.sample .s-song { font-size: 17px; color: #444; }
.sample .s-hei { font: 18px/0 "Liberation Sans", sans-serif; }
.sample .s-huge { font-size: 33px; font-weight: 700; }
.sample .s-big { font-size: 28px; }
.sample .s-mid { font-size: 18px; }
.sample .s-body { font-size: 15px; }
.sample .s-h1 { font-size: 28px; font-weight: 700; }
.sample .s-h2 { font: 21px/0 "Liberation Sans", sans-serif; }
.sample .s-h3 { font-size: 21px; font-weight: 700; }
.gallery-scroll { display: flex; flex-direction: column; width: 15px; border-left: 1px solid #c3c3c3; }
.gallery-scroll button { flex: 1; display: grid; place-items: center; border-top: 1px solid #c3c3c3; }
.gallery-scroll .dim { background: #e6e6e6; border-top: 0; }

/* quick access toolbar */
.qat { display: flex; flex: none; align-items: center; height: 35px; padding: 0 0 2px 8px; gap: 23px; }
.qat button { width: 30px; height: 24px; display: flex; align-items: center; justify-content: center; }
.qat .undo { justify-content: flex-start; padding-left: 5px; gap: 4px; }

/* navigation pane */
.workspace { flex: 1; min-height: 0; display: flex; overflow: hidden; }
.nav-pane { flex: none; width: 269px; display: flex; flex-direction: column; border-right: 1px solid #bfbfbf; padding-bottom: 15px; margin-top: 2px; }
.nav-head { display: flex; align-items: center; gap: 8px; height: 45px; padding: 2px 12px 0 13px; }
.nav-head h2 { flex: 1; font-size: 21px; line-height: 28px; color: #2b579a; }
.nav-head button { padding-bottom: 6px; }
.search { display: flex; align-items: center; height: 24px; margin: 0 18px 0 13px; border: 1px solid #ababab; background: #fff; flex: none; }
.search input { flex: 1; min-width: 0; height: 22px; border: 0; padding: 0 2px; background: none; font: inherit; color: #666; }
.search input::placeholder { color: #666; opacity: 1; }
.search button { margin-right: 4px; padding-left: 2px; color: #2b579a; }
.nav-tabs { display: flex; flex: none; height: 20px; margin: 16px 0 21px; }
.nav-tabs button { width: 49px; border-right: 1px solid #dcdcdc; text-align: center; }
.nav-tabs button:first-child { padding-left: 2px; width: 50px; }
.nav-tabs button:last-child { border: 0; }
.nav-tabs .on { color: #2b579a; font-weight: 700; }
.thumbs { flex: 1; min-height: 0; overflow: hidden; display: flex; flex-direction: column; padding-left: 66px; }
.thumb { flex: none; width: 119px; height: 207px; display: flex; flex-direction: column; align-items: center; gap: 4px; font-size: 13px; }
.thumb svg { width: 115px; height: 163px; background: #fff; border: 1px solid #9aa3ab; }
.thumb.current svg { outline: 2px solid #2b63a0; }
.thumb.current { color: #2b579a; }

/* rulers */
.vcol { flex: none; width: 28px; display: flex; flex-direction: column; }
.tabstop { flex: none; display: grid; place-items: center; width: 28px; height: 28px; padding: 3px 0 0 3px; border: 4px solid #d8d8d8; background: #fbfbfb; }
.vruler { flex: none; display: flex; flex-direction: column; width: 17px; margin: 426px 0 0 5px; background: #fff; font: 10px "Liberation Sans", sans-serif; }
.vruler span { height: 30px; width: 17px; display: flex; align-items: center; justify-content: center; writing-mode: vertical-rl; transform: rotate(180deg); line-height: 17px; }
.vmargin { height: 40px; margin-bottom: 13px; background: #c5c5c5; }
.vmargin span { height: 18px; }
.canvas { flex: 1; min-width: 0; display: flex; justify-content: center; padding: 5px 12px 0 0; }
.sheetcol { position: relative; width: 314px; }
.hruler { position: relative; display: flex; height: 16px; padding-left: 2px; background: linear-gradient(90deg, #c5c5c5 47px, #fff 47px 264px, #c5c5c5 266px); font: 10px/18px "Liberation Sans", sans-serif; }
.hruler span { flex: none; width: 30px; text-align: center; }
.mark-left { position: absolute; left: 42px; top: -3px; }
.mark-right { position: absolute; left: 261px; top: 8px; }

/* document pages */
.page { position: relative; height: 419px; margin-top: 9px; padding: 10px 46px 0 47px; background: #fff; border: 1px solid #c5c5c5; font: 6px/12px "Noto Sans CJK SC", sans-serif; color: #222; }
.page.next { margin-top: 6px; }
.page p span { display: block; text-align: justify; text-align-last: justify; white-space: nowrap; }
.page p .first { padding-left: 12px; }
.page p .last { text-align-last: left; }
.page em { font-style: normal; color: #f22; }
.page .red { margin-top: 3px; line-height: 8px; color: #f22; }
.page .blue { color: #4472c4; }
.chart { height: 99px; width: 197px; margin: 25px 0 8px 9px; border: 1px solid #d0d0d0; }
.chart figcaption { height: 14px; line-height: 16px; text-align: center; font-size: 7px; }
.page footer { margin-top: 52px; width: 76px; border-top: 1px solid #111; padding-top: 3px; font-size: 5px; line-height: 6px; }
.page footer span { display: block; }
.crop { position: absolute; width: 9px; height: 9px; border: 0 solid #aaa; }
.tl { left: 38px; top: 3px; border-width: 0 1px 1px 0; }
.tr { right: 37px; top: 3px; border-width: 0 0 1px 1px; }
.bl { left: 38px; bottom: 28px; border-width: 1px 1px 0 0; }
.br { right: 37px; bottom: 28px; border-width: 1px 0 0 1px; }
.next .tl, .next .tr { top: 28px; }
.caret { position: absolute; left: 47px; top: 38px; width: 1px; height: 7px; background: #000; }

/* context menu */
.menu { position: absolute; left: 60px; top: 119px; width: 131px; padding: 1px; background: #fff; border: 1px solid #c6c6c6; box-shadow: 1px 2px 3px rgba(0, 0, 0, .2); }
.menu > button { display: flex; align-items: center; gap: 10px; width: 100%; height: 25px; padding-left: 4px; white-space: nowrap; text-align: left; }
.menu > button > svg:first-child { width: 17px; }
.menu .sub { margin: 0 8px 0 auto; }
.onwhite { --icon-bg: #fff; }
.menu-head { display: flex; height: 24px; align-items: center; padding-left: 4px; }
.menu-head strong { flex: 1; height: 24px; margin-left: 4px; padding-left: 9px; background: #e9e9e9; line-height: 24px; color: #666; }
.paste-opts { display: flex; gap: 8px; height: 30px; align-items: center; padding-left: 29px; }
.menu hr { height: 1px; border: 0; background: #e1e1e1; margin: 0 0 1px 32px; }
.menu u { text-underline-offset: 2px; }

/* mini toolbar */
.mini { position: absolute; left: 60px; top: 527px; width: 254px; height: 71px; display: flex; background: #fff; border: 1px solid #c6c6c6; box-shadow: 1px 2px 3px rgba(0, 0, 0, .2); }
.mini-tools { width: 210px; margin: 3px 0; padding: 4px 0 0 3px; border-right: 1px solid #e1e1e1; display: flex; flex-direction: column; gap: 8px; }
.mini-style { flex: 1; display: flex; flex-direction: column; align-items: center; padding: 7px 0 0 4px; gap: 8px; }
.mini-style span { padding-right: 8px; }
.pointer { position: absolute; left: 73px; top: 215px; }
.arrow3 { position: absolute; left: 4px; top: 218px; pointer-events: none; }

/* status bar */
.status { flex: none; display: flex; align-items: center; gap: 19px; height: 19px; padding-left: 6px; background: #f1f1f1; border-top: 1px solid #c0c0c0; white-space: nowrap; color: #555; }
.views { margin-left: auto; display: flex; align-items: center; height: 18px; padding-right: 13px; }
.views button { width: 38px; height: 18px; display: grid; place-items: center; }
.views .on { background: #c8c8c8; }
.views .pm { width: 15px; }
.views input { appearance: none; width: 100px; height: 14px; margin: 0; background: linear-gradient(#aaa, #aaa) center / 100% 1px no-repeat, linear-gradient(#aaa, #aaa) center / 1px 5px no-repeat; }
.views input::-webkit-slider-thumb { appearance: none; width: 4px; height: 11px; background: #666; }
.pct { width: 38px; text-align: right; }

/* annotations over the window */
.arrows { position: absolute; left: 0; top: 0; pointer-events: none; }
.watermark { position: absolute; right: 10px; bottom: 9px; display: flex; align-items: flex-start; pointer-events: none; }
.watermark div { display: flex; flex-direction: column; }
.watermark b { font: 700 21px/23px "Noto Sans CJK SC", sans-serif; color: #5b94d2; }
.watermark span { font: 17px/20px "Liberation Sans", sans-serif; color: #6cc485; }
```
